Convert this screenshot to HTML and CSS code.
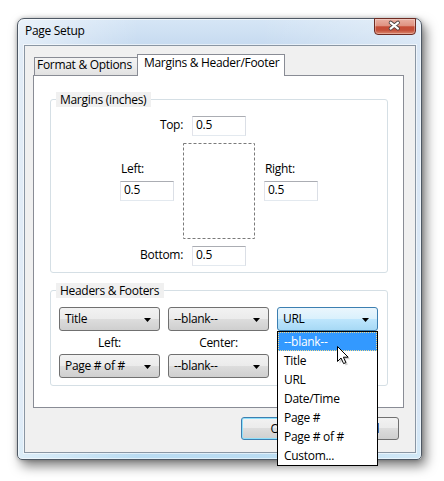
FILE: index.html
```html
<!DOCTYPE html>
<html>
<head>
<meta charset="utf-8">
<title>Page Setup</title>
<link rel="stylesheet" href="styles.css">
</head>
<body>
<div class="window">
  <div class="titlebar">
    <span class="title">Page Setup</span>
    <div class="close">
      <svg width="40" height="15" viewBox="0 0 40 15">
        <path d="M15.6 3.6 L23 9.6 M23 3.6 L15.6 9.6" stroke="#4a4040" stroke-width="3.8" fill="none" stroke-linecap="round"/>
        <path d="M15.6 3.6 L23 9.6 M23 3.6 L15.6 9.6" stroke="#ffffff" stroke-width="2.1" fill="none" stroke-linecap="round"/>
      </svg>
    </div>
  </div>
  <div class="client">
    <div class="tabs">
      <div class="tab">Format &amp; Options</div>
      <div class="tab active">Margins &amp; Header/Footer</div>
    </div>
    <div class="panel">
      <fieldset class="group margins">
        <legend>Margins (inches)</legend>
        <div class="mrow first"><span class="mlabel">Top:</span><div class="textbox">0.5</div></div>
        <div class="mmid">
          <div class="side"><span class="slabel">Left:</span><div class="textbox">0.5</div></div>
          <div class="page">
            <svg width="72" height="96" viewBox="0 0 72 96"><rect x="0.5" y="0.5" width="71" height="95" fill="none" stroke="#7a7a7a" stroke-dasharray="3 2"/></svg>
          </div>
          <div class="side"><span class="slabel">Right:</span><div class="textbox">0.5</div></div>
        </div>
        <div class="mrow"><span class="mlabel">Bottom:</span><div class="textbox">0.5</div></div>
      </fieldset>
      <fieldset class="group hf">
        <legend>Headers &amp; Footers</legend>
        <div class="hfgrid">
          <div class="combo"><span>Title</span><svg class="arrow" width="7" height="4" viewBox="0 0 7 4"><path d="M0 0H7L3.5 4Z" fill="#000"/></svg></div>
          <div class="combo"><span>--blank--</span><svg class="arrow" width="7" height="4" viewBox="0 0 7 4"><path d="M0 0H7L3.5 4Z" fill="#000"/></svg></div>
          <div class="combo hot open"><span>URL</span><svg class="arrow" width="7" height="4" viewBox="0 0 7 4"><path d="M0 0H7L3.5 4Z" fill="#000"/></svg>
            <div class="droplist">
              <div class="item sel">--blank--</div>
              <div class="item">Title</div>
              <div class="item">URL</div>
              <div class="item">Date/Time</div>
              <div class="item">Page #</div>
              <div class="item">Page # of #</div>
              <div class="item">Custom...</div>
              <svg class="cursor" width="14" height="20" viewBox="0 0 14 20">
                <path d="M1.5 1.5 L1.5 16.5 L5 13 L7.6 18.6 L9.9 17.6 L7.4 12.2 L12.2 12.2 Z" fill="rgba(0,0,0,0.18)" transform="translate(1,1)"/>
                <path d="M0.5 0.5 L0.5 15.5 L4 12 L6.6 17.6 L8.9 16.6 L6.4 11.2 L11.2 11.2 Z" fill="#fff" stroke="#000" stroke-width="1" stroke-linejoin="miter"/>
              </svg>
            </div>
          </div>
          <div class="hflabel">Left:</div>
          <div class="hflabel">Center:</div>
          <div class="hflabel"></div>
          <div class="combo"><span>Page # of #</span><svg class="arrow" width="7" height="4" viewBox="0 0 7 4"><path d="M0 0H7L3.5 4Z" fill="#000"/></svg></div>
          <div class="combo"><span>--blank--</span><svg class="arrow" width="7" height="4" viewBox="0 0 7 4"><path d="M0 0H7L3.5 4Z" fill="#000"/></svg></div>
          <div class="combo"><span></span><svg class="arrow" width="7" height="4" viewBox="0 0 7 4"><path d="M0 0H7L3.5 4Z" fill="#000"/></svg></div>
        </div>
      </fieldset>
    </div>
    <div class="buttons">
      <div class="btn default">OK</div>
      <div class="btn">Cancel</div>
    </div>
  </div>
</div>
</body>
</html>
```

FILE: styles.css
```css
* { box-sizing: border-box; }
html, body { margin: 0; padding: 0; background: #fff; }
body {
  width: 444px;
  height: 481px;
  overflow: hidden;
  font-family: "Open Sans", "Noto Sans", sans-serif;
  font-size: 12px;
  letter-spacing: -0.3px;
  color: #000;
}

.window {
  position: relative;
  margin: 18px 0 0 17px;
  width: 405px;
  height: 442px;
  border: 1px solid #4e5864;
  border-radius: 7px 7px 5px 5px;
  background:
    linear-gradient(90deg, rgba(255,255,255,0.5) 0%, rgba(255,255,255,0) 30%, rgba(255,255,255,0) 60%, rgba(255,255,255,0.35) 100%),
    linear-gradient(180deg, #d6e6f6 0%, #c7dbf0 26px, #c3d9f0 90%, #b9dcf2 100%);
  box-shadow: 4px 6px 12px rgba(0,0,0,0.5), 0 0 4px rgba(0,0,0,0.25), inset 0 0 0 1px rgba(255,255,255,0.55);
}

.titlebar {
  height: 26px;
  padding: 5px 0 0 7px;
  line-height: 14px;
  color: #000;
}

.close {
  position: absolute;
  top: -1px;
  right: 5px;
  width: 42px;
  height: 17px;
  border: 1px solid #6e2b22;
  border-radius: 0 0 4px 4px;
  background: linear-gradient(180deg, #eab0a3 0%, #df9281 45%, #c64c36 52%, #c4503a 75%, #dc8a70 100%);
  box-shadow: inset 0 0 0 1px rgba(255,255,255,0.3);
}
.close svg { display: block; }

.client {
  margin-left: 6px;
  width: 392px;
  height: 408px;
  border: 1px solid #8a96a3;
  background: #f0f0f0;
  padding: 8px 0 0 8px;
  box-shadow: 0 0 0 1px rgba(255,255,255,0.55);
}

.tabs {
  position: relative;
  z-index: 1;
  display: flex;
  align-items: flex-end;
  height: 21px;
  padding-left: 1px;
}
.tab {
  height: 18px;
  width: 103px;
  border: 1px solid #898c95;
  border-bottom: none;
  border-right: none;
  padding: 0 0 0 2px;
  line-height: 14px;
  white-space: nowrap;
  background: linear-gradient(180deg, #f4f4f4 0%, #ececec 50%, #e1e1e1 100%);
}
.tab.active {
  height: 22px;
  width: 148px;
  border-right: 1px solid #898c95;
  background: #fff;
  padding: 1px 0 0 6px;
  margin-bottom: -1px;
}

.panel {
  width: 371px;
  height: 333px;
  border: 1px solid #898c95;
  background: #fff;
  padding: 16px 15px 0 16px;
}

.group {
  margin: 0;
  padding: 0 0 6px 0;
  width: 338px;
  min-width: 0;
  border: 1px solid #d5dfe5;
  border-radius: 3px;
}
.group legend {
  margin-left: 5px;
  padding: 0 5px 0 4px;
  line-height: 15px;
  background: #f0f0f0;
}
.group.hf {
  margin-top: 10px;
  padding-bottom: 7px;
}

.mrow {
  display: flex;
  align-items: flex-start;
  margin-top: 7px;
}
.mrow.first { margin-top: 9px; }
.mlabel {
  width: 132px;
  margin-right: 9px;
  text-align: right;
  padding-top: 1px;
  line-height: 16px;
}
.textbox {
  width: 54px;
  height: 20px;
  border: 1px solid;
  border-color: #abadb3 #dbdfe6 #e3e9ef #e2e3ea;
  background: #fff;
  padding: 0 0 0 3px;
  line-height: 16px;
}
.mmid {
  display: flex;
  margin-top: 7px;
  padding-left: 69px;
}
.side {
  width: 54px;
  padding-top: 18px;
}
.slabel {
  display: block;
  line-height: 16px;
  padding-left: 1px;
  margin-bottom: 4px;
}
.page {
  width: 72px;
  height: 96px;
  margin: 0 9px;
}
.page svg { display: block; }

.hfgrid {
  display: grid;
  grid-template-columns: repeat(3, 101px);
  grid-template-rows: 24px 23px 24px;
  column-gap: 8px;
  margin: 9px 0 0 8px;
}
.combo {
  display: flex;
  align-items: center;
  justify-content: space-between;
  border: 1px solid #707070;
  border-radius: 3px;
  padding: 0 8px 0 5px;
  line-height: 22px;
  white-space: nowrap;
  background: linear-gradient(180deg, #f2f2f2 0%, #ebebeb 50%, #dddddd 50%, #cfcfcf 100%);
}
.combo .arrow { display: block; margin-top: 2px; }
.combo.hot {
  border-color: #3c7fb1;
  background: linear-gradient(180deg, #eaf6fd 0%, #d9f0fc 50%, #bee6fd 50%, #a7d9f5 100%);
}
.combo.open { position: relative; }
.hflabel {
  text-align: center;
  line-height: 21px;
  padding-top: 1px;
}

.droplist {
  position: absolute;
  left: -1px;
  top: 23px;
  width: 101px;
  border: 1px solid #000;
  background: #fff;
  z-index: 5;
}
.droplist .item {
  height: 19px;
  line-height: 19px;
  padding-left: 6px;
  color: #000;
}
.droplist .item.sel {
  background: #3399ff;
  color: #fff;
  outline: 1px dotted #f3d98a;
  outline-offset: -1px;
}
.droplist .cursor {
  position: absolute;
  left: 59px;
  top: 14px;
  display: block;
}

.buttons {
  display: flex;
  justify-content: flex-end;
  gap: 8px;
  margin-top: 9px;
  padding-right: 16px;
}
.btn {
  width: 75px;
  height: 23px;
  border: 1px solid #707070;
  border-radius: 3px;
  text-align: center;
  line-height: 21px;
  background: linear-gradient(180deg, #f2f2f2 0%, #ebebeb 50%, #dddddd 50%, #cfcfcf 100%);
}
.btn.default {
  border-color: #3c7fb1;
  box-shadow: inset 0 0 0 1px #8fe0fb;
}
```
